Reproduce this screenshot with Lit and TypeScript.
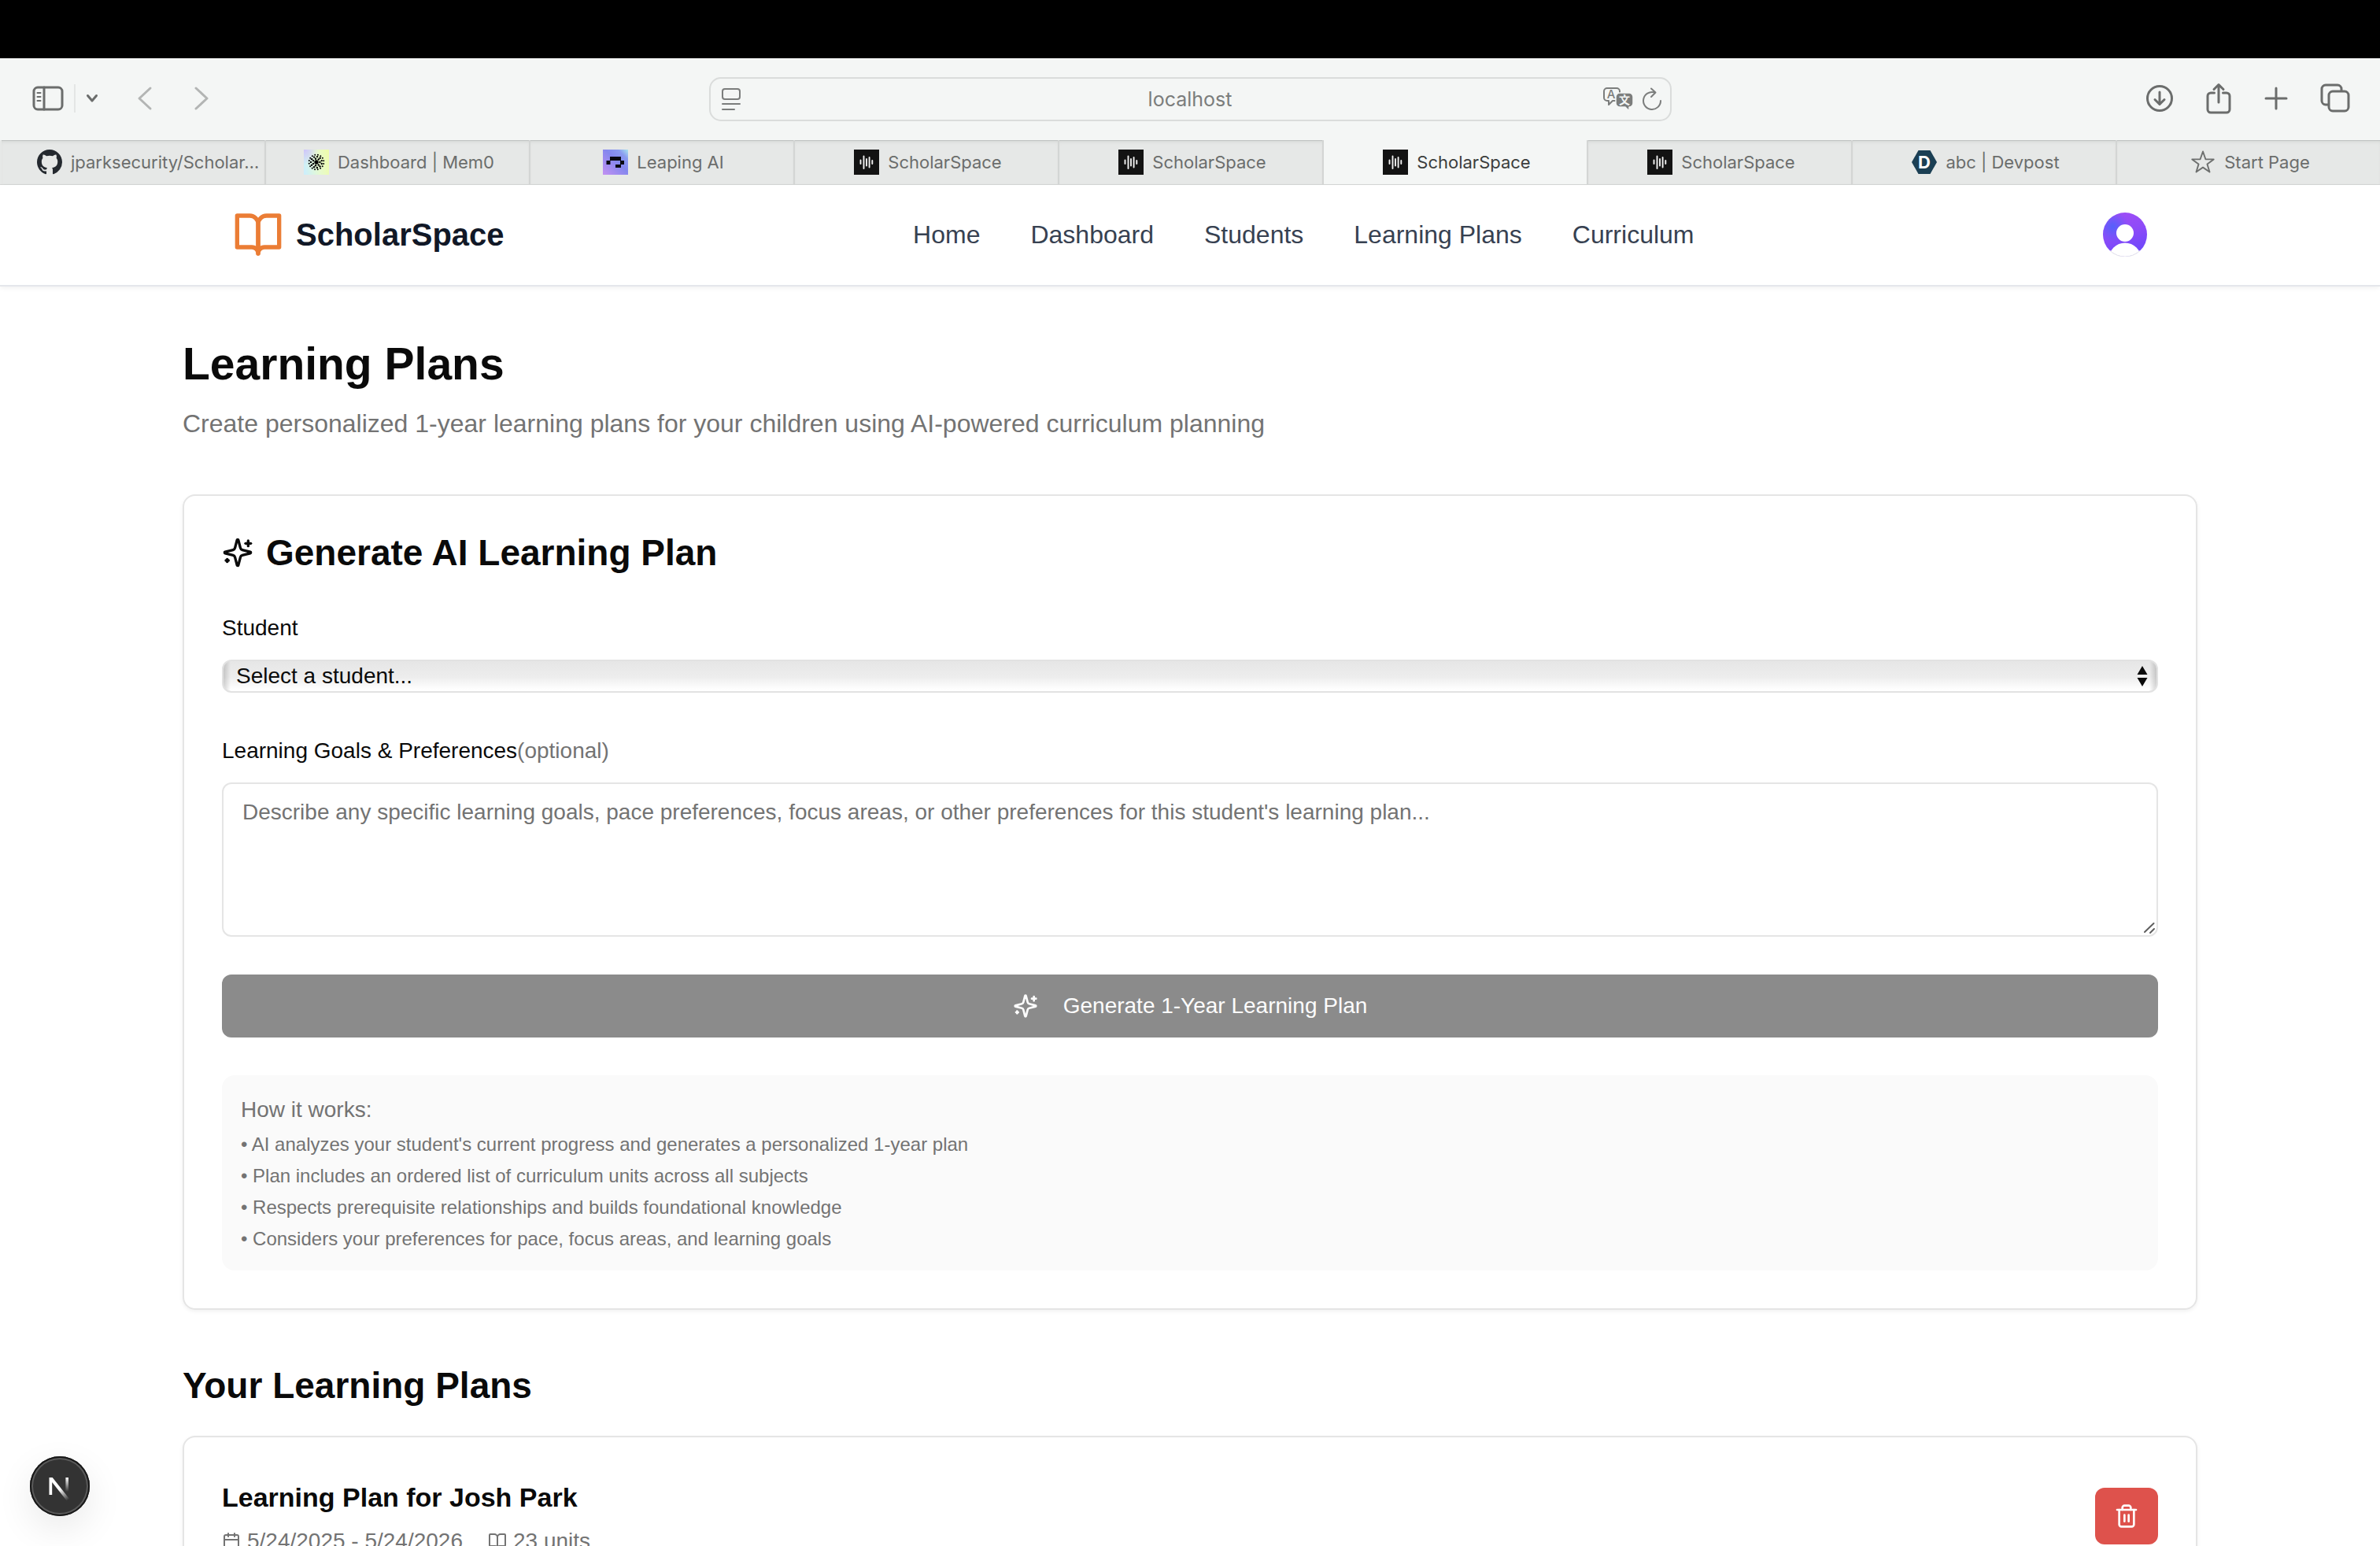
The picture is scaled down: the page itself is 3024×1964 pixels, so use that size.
import { LitElement, html, css, svg, nothing } from "lit";
import { customElement, property } from "lit/decorators.js";
import { classMap } from "lit/directives/class-map.js";

type TabIcon = "github" | "mem0" | "leaping" | "bars" | "devpost" | "star";

interface BrowserTab {
  title: string;
  icon: TabIcon;
  active?: boolean;
  long?: boolean;
}

const TABS: BrowserTab[] = [
  { title: "jparksecurity/Scholar…", icon: "github", long: true },
  { title: "Dashboard | Mem0", icon: "mem0" },
  { title: "Leaping AI", icon: "leaping" },
  { title: "ScholarSpace", icon: "bars" },
  { title: "ScholarSpace", icon: "bars" },
  { title: "ScholarSpace", icon: "bars", active: true },
  { title: "ScholarSpace", icon: "bars" },
  { title: "abc | Devpost", icon: "devpost" },
  { title: "Start Page", icon: "star" },
];

const NAV = ["Home", "Dashboard", "Students", "Learning Plans", "Curriculum"];

const STEPS = [
  "AI analyzes your student's current progress and generates a personalized 1-year plan",
  "Plan includes an ordered list of curriculum units across all subjects",
  "Respects prerequisite relationships and builds foundational knowledge",
  "Considers your preferences for pace, focus areas, and learning goals",
];

// Rings of dots, as [radius, count, dot size].
const MEM0_RINGS: [number, number, number][] = [
  [4.4, 7, 1.2],
  [7, 11, 1.2],
  [9.4, 16, 1],
];

const mem0Dots = MEM0_RINGS.flatMap(([radius, count, size], ring) =>
  Array.from({ length: count }, (_, i) => {
    const a = (i / count) * Math.PI * 2 + ring * 0.3;
    return svg`<circle cx=${16 + radius * Math.cos(a)} cy=${16 + radius * Math.sin(a)} r=${size} />`;
  })
);

const favicons = {
  github: () => html`<svg class="favicon" viewBox="0 0 16 16" aria-hidden="true">
    <path fill="#24292f" d="M8 0C3.58 0 0 3.58 0 8c0 3.54 2.29 6.53 5.47 7.59.4.07.55-.17.55-.38 0-.19-.01-.82-.01-1.49-2.01.37-2.53-.49-2.69-.94-.09-.23-.48-.94-.82-1.13-.28-.15-.68-.52-.01-.53.63-.01 1.08.58 1.23.82.72 1.21 1.87.87 2.33.66.07-.52.28-.87.51-1.07-1.78-.2-3.64-.89-3.64-3.95 0-.87.31-1.59.82-2.15-.08-.2-.36-1.02.08-2.12 0 0 .67-.21 2.2.82.64-.18 1.32-.27 2-.27s1.36.09 2 .27c1.53-1.04 2.2-.82 2.2-.82.44 1.1.16 1.92.08 2.12.51.56.82 1.27.82 2.15 0 3.07-1.87 3.75-3.65 3.95.29.25.54.73.54 1.48 0 1.07-.01 1.93-.01 2.2 0 .21.15.46.55.38A8.01 8.01 0 0 0 16 8c0-4.42-3.58-8-8-8z" />
  </svg>`,
  mem0: () => html`<svg class="favicon" viewBox="0 0 32 32" aria-hidden="true">
    <defs>
      <linearGradient id="m0" x1="0" y1="0.6" x2="1" y2="0.4">
        <stop offset="0" stop-color="#cdeffa" /><stop offset="0.55" stop-color="#e6fad0" /><stop offset="1" stop-color="#eefcae" />
      </linearGradient>
      <radialGradient id="m1" cx="0" cy="0" r="0.6">
        <stop offset="0" stop-color="#cfc4fa" /><stop offset="1" stop-color="#cfc4fa" stop-opacity="0" />
      </radialGradient>
    </defs>
    <rect width="32" height="32" fill="url(#m0)" /><rect width="32" height="32" fill="url(#m1)" />
    <circle cx="16" cy="16" r="2.700" />${mem0Dots}
  </svg>`,
  leaping: () => html`<svg class="favicon" viewBox="0 0 32 32" aria-hidden="true">
    <defs>
      <linearGradient id="l0" x1="0" y1="1" x2="1" y2="0">
        <stop offset="0" stop-color="#c391f2" /><stop offset="0.55" stop-color="#8487ee" /><stop offset="0.8" stop-color="#8a9bf0" /><stop offset="1" stop-color="#a9e6ee" />
      </linearGradient>
    </defs>
    <rect width="32" height="32" fill="url(#l0)" />
    <path d="M9 9h14v5h4v5h-4v4h-7v-4h6v-5H9.500v5h-5v-5H9z" fill="#0a0a12" />
  </svg>`,
  bars: () => html`<svg class="favicon" viewBox="0 0 32 32" aria-hidden="true">
    <rect width="32" height="32" fill="#131313" />
    <path d="M8.500 13.500v4.500M12.500 8.500v15.500M16 12v8.500M19.600 10v12.500M23.300 14v4" stroke="#f2f2f2" stroke-width="1.900" stroke-linecap="round" />
  </svg>`,
  devpost: () => html`<svg class="favicon" viewBox="0 0 32 32" aria-hidden="true">
    <path d="M8.500 1h15L32 16l-8.500 15h-15L0 16z" fill="#1b3f54" />
    <text class="mark" x="16" y="24" text-anchor="middle">D</text>
  </svg>`,
  star: () => html`<svg class="favicon" viewBox="0 0 32 32" aria-hidden="true">
    <path d="M16 2.500l3.400 9.700 10.300.2-8.200 6.200 3 9.900-8.500-5.900-8.500 5.900 3-9.900-8.200-6.200 10.300-.2z" fill="none" stroke="#6d6f6e" stroke-width="1.900" stroke-linejoin="round" />
  </svg>`,
};

const lucide = {
  book: svg`<path d="M2 3h6a4 4 0 0 1 4 4v14a3 3 0 0 0-3-3H2z" /><path d="M22 3h-6a4 4 0 0 0-4 4v14a3 3 0 0 1 3-3h7z" />`,
  openBook: svg`<path d="M12 7v14" /><path d="M3 18a1 1 0 0 1-1-1V4a1 1 0 0 1 1-1h5a4 4 0 0 1 4 4 4 4 0 0 1 4-4h5a1 1 0 0 1 1 1v13a1 1 0 0 1-1 1h-6a3 3 0 0 0-3 3 3 3 0 0 0-3-3z" />`,
  sparkles: svg`<path d="M9.937 15.500A2 2 0 0 0 8.500 14.063l-6.135-1.582a.5.5 0 0 1 0-.962L8.500 9.936A2 2 0 0 0 9.937 8.500l1.582-6.135a.5.5 0 0 1 .963 0L14.063 8.500A2 2 0 0 0 15.500 9.937l6.135 1.581a.5.5 0 0 1 0 .964L15.500 14.063a2 2 0 0 0-1.437 1.437l-1.582 6.135a.5.5 0 0 1-.963 0z" /><path d="M20 3v4" /><path d="M22 5h-4" /><path d="M4 17v2" /><path d="M5 18H3" />`,
  calendar: svg`<path d="M8 2v4" /><path d="M16 2v4" /><rect width="18" height="18" x="3" y="4" rx="2" /><path d="M3 10h18" />`,
  trash: svg`<path d="M3 6h18" /><path d="M19 6v14c0 1-1 2-2 2H7c-1 0-2-1-2-2V6" /><path d="M8 6V4c0-1 1-2 2-2h4c1 0 2 1 2 2v2" /><path d="M10 11v6" /><path d="M14 11v6" />`,
};

const icon = (name: keyof typeof lucide, size: string) => html`<svg
  class="icon ${size}"
  viewBox="0 0 24 24"
  aria-hidden="true"
>${lucide[name]}</svg>`;

@customElement("browser-toolbar")
export class BrowserToolbar extends LitElement {
  static styles = css`
    :host {
      display: grid;
      grid-template-columns: 1fr minmax(0, 1223px) 1fr;
      align-items: center;
      height: 104px;
      background: #f4f6f5;
      color: #6b6d6c;
      font-family: Inter, "Liberation Sans", sans-serif;
    }
    svg {
      display: block;
      fill: none;
      stroke: currentColor;
      stroke-width: 3;
      stroke-linecap: round;
      stroke-linejoin: round;
    }
    button {
      display: block;
      padding: 0;
      border: 0;
      background: none;
      color: inherit;
    }
    .left,
    .right {
      display: flex;
      align-items: center;
      padding-bottom: 2px;
    }
    .left {
      padding-left: 41px;
    }
    .divider {
      width: 2px;
      height: 36px;
      margin: 0 13px;
      background: #e4e6e5;
    }
    .history {
      display: flex;
      gap: 48px;
      margin-left: 47px;
      color: #b3b5b4;
    }
    .right {
      justify-content: flex-end;
      gap: 40px;
      padding-right: 38px;
    }
    .address {
      box-sizing: border-box;
      display: grid;
      grid-template-columns: 78px 1fr 78px;
      align-items: center;
      height: 56px;
      padding: 0 10px;
      border: 2px solid #dadcdb;
      border-radius: 15px;
      color: #7b7d7c;
    }
    .address svg {
      stroke-width: 2;
    }
    .url {
      min-width: 0;
      padding: 0;
      border: 0;
      outline: 0;
      background: none;
      color: inherit;
      font: inherit;
      font-size: 25px;
      line-height: 32px;
      text-align: center;
    }
    .reader {
      margin-left: 2px;
    }
    .tools {
      display: flex;
      align-items: center;
      justify-content: flex-end;
      gap: 10px;
    }
    .mark {
      font: 500 15px Inter, sans-serif;
      fill: currentColor;
      stroke: none;
    }
    .han {
      font: 700 14px "Noto Sans CJK SC", sans-serif;
      fill: #f4f6f5;
      stroke: none;
    }
  `;

  render() {
    return html`
      <div class="left">
        <button aria-label="Show sidebar">
          <svg width="40" height="32" viewBox="0 0 40 32">
            <rect x="2" y="2" width="36" height="28" rx="5" />
            <path d="M15 2v28" />
            <path d="M6.500 9h4M6.500 14h4M6.500 19h4" stroke-width="2" />
          </svg>
        </button>
        <span class="divider"></span>
        <button aria-label="Tab groups">
          <svg width="16" height="12" viewBox="0 0 16 12"><path d="M2.500 2.500L8 9l5.500-6.500" /></svg>
        </button>
        <div class="history">
          <button aria-label="Back">
            <svg width="24" height="32" viewBox="0 0 24 32"><path d="M19 3L5 16l14 13" /></svg>
          </button>
          <button aria-label="Forward">
            <svg width="24" height="32" viewBox="0 0 24 32"><path d="M5 3l14 13L5 29" /></svg>
          </button>
        </div>
      </div>
      <div class="address">
        <svg class="reader" width="28" height="30" viewBox="0 0 28 30" aria-hidden="true">
          <rect x="3" y="2" width="22" height="13" rx="3" />
          <path d="M3 21h22M3 28h15" />
        </svg>
        <input class="url" aria-label="Address" value="localhost" />
        <div class="tools">
          <button aria-label="Translate">
            <svg width="40" height="32" viewBox="0 0 40 32">
              <path d="M6 2h12a4 4 0 0 1 4 4v12H13l-5 5v-5H6a4 4 0 0 1-4-4V6a4 4 0 0 1 4-4z" />
              <path d="M22 8h12a5 5 0 0 1 5 5v8a5 5 0 0 1-5 5v5l-5-5h-7a5 5 0 0 1-5-5v-8a5 5 0 0 1 5-5z" fill="currentColor" stroke="#f4f6f5" stroke-width="1.500" />
              <text class="mark" x="11" y="15" text-anchor="middle">A</text>
              <text class="han" x="28" y="22" text-anchor="middle">文</text>
            </svg>
          </button>
          <button aria-label="Reload">
            <svg width="26" height="30" viewBox="0 0 26 30">
              <path d="M24 17a11 11 0 1 1-8-10.600M12 1.500l5.500 5-5.500 5.500" />
            </svg>
          </button>
        </div>
      </div>
      <div class="right">
        <button aria-label="Downloads">
          <svg width="36" height="38" viewBox="0 0 36 38">
            <circle cx="18" cy="19" r="15.500" />
            <path d="M18 11v15M12 20.500l6 6 6-6" />
          </svg>
        </button>
        <button aria-label="Share">
          <svg width="34" height="40" viewBox="0 0 34 40">
            <path d="M11.500 13H7a4 4 0 0 0-4 4v17a4 4 0 0 0 4 4h20a4 4 0 0 0 4-4V17a4 4 0 0 0-4-4h-4.500M17 25V3M11 8.500l6-6 6 6" />
          </svg>
        </button>
        <button aria-label="New tab">
          <svg width="32" height="32" viewBox="0 0 32 32"><path d="M16 3v26M3 16h26" /></svg>
        </button>
        <button aria-label="Tab overview">
          <svg width="38" height="38" viewBox="0 0 38 38">
            <rect x="11" y="10" width="25" height="25" rx="5" />
            <path d="M10 27H7a5 5 0 0 1-5-5V7a5 5 0 0 1 5-5h15a5 5 0 0 1 5 5v2" />
          </svg>
        </button>
      </div>
    `;
  }
}

@customElement("browser-tabs")
export class BrowserTabs extends LitElement {
  @property({ attribute: false }) tabs: BrowserTab[] = [];

  static styles = css`
    :host {
      display: grid;
      grid-auto-flow: column;
      grid-auto-columns: minmax(0, 1fr);
      height: 56px;
      border-bottom: 1px solid #d5d7d6;
      font-family: Inter, "Liberation Sans", sans-serif;
    }
    .tab {
      display: flex;
      align-items: center;
      justify-content: center;
      gap: 11px;
      padding: 0 0 0 4px;
      border: 0;
      border-left: 2px solid #d3d5d4;
      background: #e6e8e7;
      box-shadow: inset 0 1px 0 #c0c3c2, inset 0 4px 5px -3px #c9cccb;
      color: #6b6d6c;
      font: inherit;
      font-size: 22px;
      line-height: 32px;
      white-space: nowrap;
    }
    .tab:first-child {
      border-left-color: transparent;
    }
    .long {
      justify-content: flex-start;
      padding-left: 45px;
    }
    .active {
      background: #f4f6f5;
      box-shadow: none;
      color: #3c3e3d;
    }
    .favicon {
      flex: none;
      display: block;
      width: 32px;
      height: 32px;
    }
    .mark {
      font: 700 22px Inter, sans-serif;
      fill: #fff;
    }
  `;

  render() {
    return this.tabs.map(
      (tab) => html`<button
        class=${classMap({ tab: true, active: !!tab.active, long: !!tab.long })}
        aria-current=${tab.active ? "page" : nothing}
      >
        ${favicons[tab.icon]()}<span>${tab.title}</span>
      </button>`
    );
  }
}

@customElement("app-root")
export class AppRoot extends LitElement {
  static styles = css`
    :host {
      display: flex;
      flex-direction: column;
      height: 100vh;
      overflow: hidden;
      position: relative;
      background: #fff;
      color: #0a0a0a;
      font-family: "Liberation Sans", Arial, sans-serif;
      font-size: 28px;
      line-height: 40px;
    }
    h1,
    h2,
    h3,
    p,
    ul {
      margin: 0;
      padding: 0;
    }
    .bezel {
      flex: none;
      height: 74px;
      background: #000;
    }
    browser-toolbar,
    browser-tabs {
      flex: none;
    }
    .icon {
      flex: none;
      display: block;
      fill: none;
      stroke: currentColor;
      stroke-width: 2;
      stroke-linecap: round;
      stroke-linejoin: round;
    }
    .xl { width: 64px; height: 64px; }
    .lg { width: 40px; height: 40px; }
    .md { width: 32px; height: 32px; }
    .sm { width: 24px; height: 24px; }

    .site-header {
      flex: none;
      border-bottom: 2px solid #e5e7eb;
      box-shadow: 0 2px 6px rgba(0, 0, 0, 0.06);
    }
    .bar {
      box-sizing: border-box;
      display: flex;
      align-items: center;
      justify-content: space-between;
      max-width: 2560px;
      height: 127px;
      margin: 0 auto;
      padding: 0 64px 2px;
    }
    .brand {
      display: flex;
      align-items: center;
      gap: 16px;
      color: #111827;
      font-size: 40px;
      font-weight: 700;
      line-height: 56px;
      text-decoration: none;
    }
    .brand .icon {
      color: #eb7d35;
    }
    .nav {
      display: flex;
      gap: 64px;
      font-size: 32px;
      line-height: 48px;
    }
    .nav a {
      color: #374151;
      text-decoration: none;
    }
    .account {
      padding: 0;
      border: 0;
      background: none;
    }
    .account svg {
      display: block;
      width: 56px;
      height: 56px;
    }

    .page {
      flex: 1;
      min-height: 0;
      overflow: hidden;
    }
    main {
      box-sizing: border-box;
      max-width: 2560px;
      margin: 0 auto;
      padding: 62px 0;
    }
    h1 {
      font-size: 57px;
      line-height: 72px;
    }
    .lead {
      margin-top: 16px;
      color: #737373;
      font-size: 32px;
      line-height: 48px;
    }
    .card {
      margin-top: 66px;
      padding: 48px;
      border: 2px solid #e5e5e5;
      border-radius: 16px;
      box-shadow: 0 2px 5px rgba(0, 0, 0, 0.06);
    }
    .card-title {
      display: flex;
      align-items: center;
      gap: 16px;
      font-size: 46px;
      line-height: 48px;
    }
    .field {
      display: grid;
      gap: 20px;
      margin-top: 54px;
    }
    .card-title + .field {
      margin-top: 52px;
    }
    .optional {
      color: #737373;
    }
    .stack {
      display: grid;
      align-items: center;
    }
    .stack > * {
      grid-area: 1 / 1;
    }
    select {
      box-sizing: border-box;
      width: 100%;
      height: 42px;
      padding: 0 40px 0 16px;
      border: 2px solid #e2e2e2;
      border-radius: 12px;
      appearance: none;
      background:
        linear-gradient(to right, rgba(0, 0, 0, 0.16), rgba(0, 0, 0, 0) 9px),
        linear-gradient(to left, rgba(0, 0, 0, 0.16), rgba(0, 0, 0, 0) 9px),
        linear-gradient(#e6e6e6, #ededed 52%, #fff 95%);
      color: inherit;
      font: inherit;
      line-height: 38px;
    }
    .arrows {
      justify-self: end;
      width: 14px;
      height: 26px;
      margin-right: 13px;
      pointer-events: none;
    }
    textarea {
      box-sizing: border-box;
      display: block;
      width: 100%;
      height: 196px;
      padding: 16px 24px;
      border: 2px solid #e5e5e5;
      border-radius: 12px;
      background: transparent;
      color: inherit;
      font: inherit;
      resize: vertical;
    }
    textarea::-webkit-resizer {
      background: transparent;
    }
    textarea::placeholder {
      color: #737373;
      opacity: 1;
    }
    .grip {
      align-self: end;
      justify-self: end;
      width: 16px;
      height: 16px;
      margin: 3px;
      pointer-events: none;
    }
    .generate {
      display: flex;
      align-items: center;
      justify-content: center;
      gap: 32px;
      width: 100%;
      height: 80px;
      margin-top: 48px;
      padding: 0;
      border: 0;
      border-radius: 12px;
      background: #8b8b8b;
      color: #fcfcfc;
      font: inherit;
    }
    .how {
      margin-top: 48px;
      padding: 24px;
      border-radius: 16px;
      background: #fafafa;
      color: #737373;
    }
    .how ul {
      display: grid;
      gap: 8px;
      margin-top: 8px;
      list-style: none;
      font-size: 24px;
      line-height: 32px;
    }
    .section-title {
      margin-top: 64px;
      font-size: 46px;
      line-height: 64px;
    }
    .plan {
      display: flex;
      align-items: center;
      justify-content: space-between;
      margin-top: 32px;
    }
    h3 {
      font-size: 34px;
      line-height: 56px;
    }
    .meta {
      display: flex;
      gap: 32px;
      margin-top: 8px;
      color: #737373;
    }
    .meta span {
      display: flex;
      align-items: center;
      gap: 8px;
    }
    .delete {
      display: grid;
      place-items: center;
      width: 80px;
      height: 72px;
      padding: 0;
      border: 0;
      border-radius: 12px;
      background: #de524c;
      color: #fff;
    }
    .devtools {
      position: absolute;
      left: 38px;
      bottom: 38px;
      width: 76px;
      height: 76px;
      padding: 0;
      border: 0;
      border-radius: 50%;
      background: #333;
      box-shadow: inset 0 0 0 2px #171717, inset 0 0 0 4px #5a5a5a,
        0 16px 48px rgba(0, 0, 0, 0.09);
    }
    .devtools svg {
      display: block;
      width: 76px;
      height: 76px;
    }
  `;

  render() {
    return html`
      <div class="bezel"></div>
      <browser-toolbar></browser-toolbar>
      <browser-tabs .tabs=${TABS}></browser-tabs>
      <header class="site-header">
        <div class="bar">
          <a class="brand" href="#home">${icon("book", "xl")}<span>ScholarSpace</span></a>
          <nav class="nav">
            ${NAV.map((label) => html`<a href="#${label.toLowerCase().replace(" ", "-")}">${label}</a>`)}
          </nav>
          <button class="account" aria-label="Open user menu">
            <svg viewBox="0 0 56 56" aria-hidden="true">
              <defs>
                <clipPath id="disc"><circle cx="28" cy="28" r="28" /></clipPath>
                <radialGradient id="blue" cx="0.22" cy="0.32" r="0.36">
                  <stop offset="0" stop-color="#5560fb" /><stop offset="1" stop-color="#5560fb" stop-opacity="0" />
                </radialGradient>
                <linearGradient id="violet" x1="0.4" y1="0" x2="0.7" y2="1">
                  <stop offset="0" stop-color="#9d4df6" /><stop offset="0.4" stop-color="#8f4bf8" /><stop offset="1" stop-color="#6847fb" />
                </linearGradient>
              </defs>
              <g clip-path="url(#disc)">
                <rect width="56" height="56" fill="url(#violet)" />
                <rect width="56" height="56" fill="url(#blue)" />
                <circle cx="28" cy="26" r="11" fill="#fff" />
                <circle cx="28" cy="59" r="20.500" fill="#fff" />
              </g>
              <path d="M9 48.500a27.500 27.500 0 0 0 38 0" fill="none" stroke="#e6e6ea" />
            </svg>
          </button>
        </div>
      </header>
      <div class="page">
        <main>
          <h1>Learning Plans</h1>
          <p class="lead">
            Create personalized 1-year learning plans for your children using AI-powered curriculum planning
          </p>
          <section class="card">
            <h2 class="card-title">${icon("sparkles", "lg")}<span>Generate AI Learning Plan</span></h2>
            <div class="field">
              <label for="student">Student</label>
              <div class="stack">
                <select id="student">
                  <option>Select a student...</option>
                </select>
                <svg class="arrows" viewBox="0 0 14 26" aria-hidden="true">
                  <path d="M7 0l6.500 11H.5zM7 26l6.500-11H.5z" fill="#0a0a0a" />
                </svg>
              </div>
            </div>
            <div class="field">
              <label for="goals">Learning Goals &amp; Preferences<span class="optional">(optional)</span></label>
              <div class="stack">
                <textarea
                  id="goals"
                  placeholder="Describe any specific learning goals, pace preferences, focus areas, or other preferences for this student's learning plan..."
                ></textarea>
                <svg class="grip" viewBox="0 0 16 16" aria-hidden="true">
                  <path d="M2 13L13.500 2M9 14l5-5" fill="none" stroke="#5f5f5f" stroke-width="2" stroke-linecap="round" />
                </svg>
              </div>
            </div>
            <button class="generate" disabled>
              ${icon("sparkles", "md")}<span>Generate 1-Year Learning Plan</span>
            </button>
            <div class="how">
              <p>How it works:</p>
              <ul>
                ${STEPS.map((step) => html`<li>• ${step}</li>`)}
              </ul>
            </div>
          </section>
          <h2 class="section-title">Your Learning Plans</h2>
          <article class="card plan">
            <div>
              <h3>Learning Plan for Josh Park</h3>
              <div class="meta">
                <span>${icon("calendar", "sm")}5/24/2025 - 5/24/2026</span>
                <span>${icon("openBook", "sm")}23 units</span>
              </div>
            </div>
            <button class="delete" aria-label="Delete plan">${icon("trash", "md")}</button>
          </article>
        </main>
      </div>
      <button class="devtools" aria-label="Open developer tools">
        <svg viewBox="0 0 76 76" fill="none" aria-hidden="true">
          <defs>
            <linearGradient id="n0" gradientUnits="userSpaceOnUse" x1="38" y1="42" x2="48" y2="56">
              <stop stop-color="#fff" /><stop offset="1" stop-color="#fff" stop-opacity="0" />
            </linearGradient>
            <linearGradient id="n1" gradientUnits="userSpaceOnUse" x1="47" y1="27" x2="47" y2="45">
              <stop stop-color="#fff" /><stop offset="1" stop-color="#fff" stop-opacity="0" />
            </linearGradient>
          </defs>
          <path d="M24.500 27h4.200L50 54l-3.200 2.500L28.200 33v16h-3.700z" fill="url(#n0)" />
          <path d="M45.400 27h3.600v18h-3.600z" fill="url(#n1)" />
        </svg>
      </button>
    `;
  }
}
